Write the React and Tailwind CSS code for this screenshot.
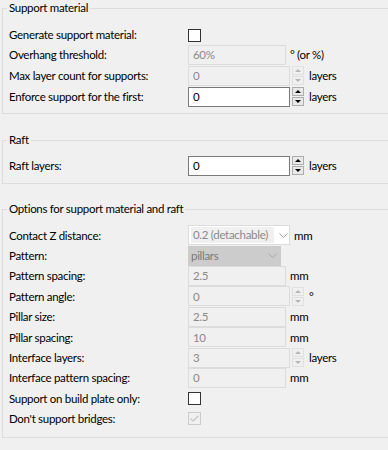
import React from 'react'

const font = { fontFamily: 'Lato, "Noto Sans", sans-serif' }

function Spin({ enabled }) {
  const btn = enabled
    ? 'border-[#adadad] bg-[#e9e9e9]'
    : 'border-[#e0e0e0] bg-[#f0f0f0]'
  const arrow = enabled ? '#000' : '#b5b5b5'
  return (
    <div className="flex flex-col gap-[1px] ml-[2px]">
      <div className={`w-[12px] h-[9px] border flex items-center justify-center ${btn}`}>
        <svg width="6" height="3" viewBox="0 0 6 3"><path d="M0 3 L3 0 L6 3 Z" fill={arrow} /></svg>
      </div>
      <div className={`w-[12px] h-[9px] border flex items-center justify-center ${btn}`}>
        <svg width="6" height="3" viewBox="0 0 6 3"><path d="M0 0 L3 3 L6 0 Z" fill={arrow} /></svg>
      </div>
    </div>
  )
}

function Field({ value, enabled, spin, unit }) {
  const box = enabled
    ? 'bg-white border-[#7a7a7a] text-black'
    : 'bg-[#f0f0f0] border-[#dcdcdc] text-[#8a8a8a]'
  return (
    <div className="flex items-center">
      <div className={`h-[20px] border flex items-center pl-[4px] ${box} ${spin ? 'w-[102px]' : 'w-[98px]'}`}>
        {value}
      </div>
      {spin && <Spin enabled={enabled} />}
      {unit && <span className={spin ? 'ml-[5px]' : 'ml-[4px]'}>{unit}</span>}
    </div>
  )
}

function Check({ checked, enabled }) {
  return enabled ? (
    <div className="w-[13px] h-[13px] border border-[#333333] bg-white" />
  ) : (
    <div className="w-[13px] h-[13px] border border-[#cccccc] bg-[#f0f0f0] flex items-center justify-center">
      {checked && (
        <svg width="9" height="7" viewBox="0 0 9 7"><path d="M0.5 3.5 L3.2 6 L8.5 0.8" stroke="#c4c4c4" strokeWidth="1.2" fill="none" /></svg>
      )}
    </div>
  )
}

function Row({ label, children, h = 'h-[21px]' }) {
  return (
    <div className={`flex items-center ${h}`}>
      <div className="w-[179px] shrink-0 whitespace-nowrap">{label}</div>
      {children}
    </div>
  )
}

function Group({ title, children, className = '' }) {
  return (
    <fieldset className={`border-l border-t border-b border-[#dcdcdc] ml-[2px] mr-[-4px] pl-[6px] ${className}`}>
      <legend className="px-[2px] ml-[-2px] leading-[16px] h-[16px]">{title}</legend>
      {children}
    </fieldset>
  )
}

export default function App() {
  return (
    <div className="w-[388px] h-[450px] bg-[#f0f0f0] overflow-hidden text-[11.5px] tracking-[-0.3px] text-black" style={font}>
      <Group title="Support material" className="pb-[6px]">
        <div className="pt-[10px] flex flex-col">
          <Row label="Generate support material:" h="h-[18px]"><Check enabled /></Row>
          <Row label="Overhang threshold:"><Field value="60%" unit="° (or %)" /></Row>
          <Row label="Max layer count for supports:"><Field value="0" spin unit="layers" /></Row>
          <Row label="Enforce support for the first:"><Field value="0" spin enabled unit="layers" /></Row>
        </div>
      </Group>

      <Group title="Raft" className="mt-[18px] pb-[7px]">
        <div className="pt-[7px] flex flex-col">
          <Row label="Raft layers:"><Field value="0" spin enabled unit="layers" /></Row>
        </div>
      </Group>

      <Group title="Options for support material and raft" className="mt-[17px] pb-[8px]">
        <div className="pt-[8px] flex flex-col">
          <Row label="Contact Z distance:" h="h-[20.4px]">
            <div className="flex items-center">
              <div className="h-[20px] w-[102px] border border-[#dcdcdc] bg-white flex items-center pl-[2px]">
                <div className="h-[16px] w-[83px] bg-[#f0f0f0] text-[#8a8a8a] pl-[2px] leading-[16px] whitespace-nowrap">0.2 (detachable)</div>
                <svg className="ml-[5px]" width="9" height="5" viewBox="0 0 9 5"><path d="M0.5 0.5 L4.5 4.5 L8.5 0.5" stroke="#a0a0a0" fill="none" /></svg>
              </div>
              <span className="ml-[4px]">mm</span>
            </div>
          </Row>
          <Row label="Pattern:" h="h-[20.4px]">
            <div className="h-[20px] w-[93px] bg-[#cccccc] text-[#7a7a7a] flex items-center justify-between pl-[3px] pr-[4px]">
              <span>pillars</span>
              <svg width="9" height="5" viewBox="0 0 9 5"><path d="M0.5 0.5 L4.5 4.5 L8.5 0.5" stroke="#a8a8a8" fill="none" /></svg>
            </div>
          </Row>
          <Row label="Pattern spacing:" h="h-[20.4px]"><Field value="2.5" unit="mm" /></Row>
          <Row label="Pattern angle:" h="h-[20.4px]"><Field value="0" spin unit="°" /></Row>
          <Row label="Pillar size:" h="h-[20.4px]"><Field value="2.5" unit="mm" /></Row>
          <Row label="Pillar spacing:" h="h-[20.4px]"><Field value="10" unit="mm" /></Row>
          <Row label="Interface layers:" h="h-[20.4px]"><Field value="3" spin unit="layers" /></Row>
          <Row label="Interface pattern spacing:" h="h-[20.4px]"><Field value="0" unit="mm" /></Row>
          <Row label="Support on build plate only:" h="h-[20.4px]"><Check enabled /></Row>
          <Row label="Don't support bridges:" h="h-[20.4px]"><Check checked /></Row>
        </div>
      </Group>
    </div>
  )
}
